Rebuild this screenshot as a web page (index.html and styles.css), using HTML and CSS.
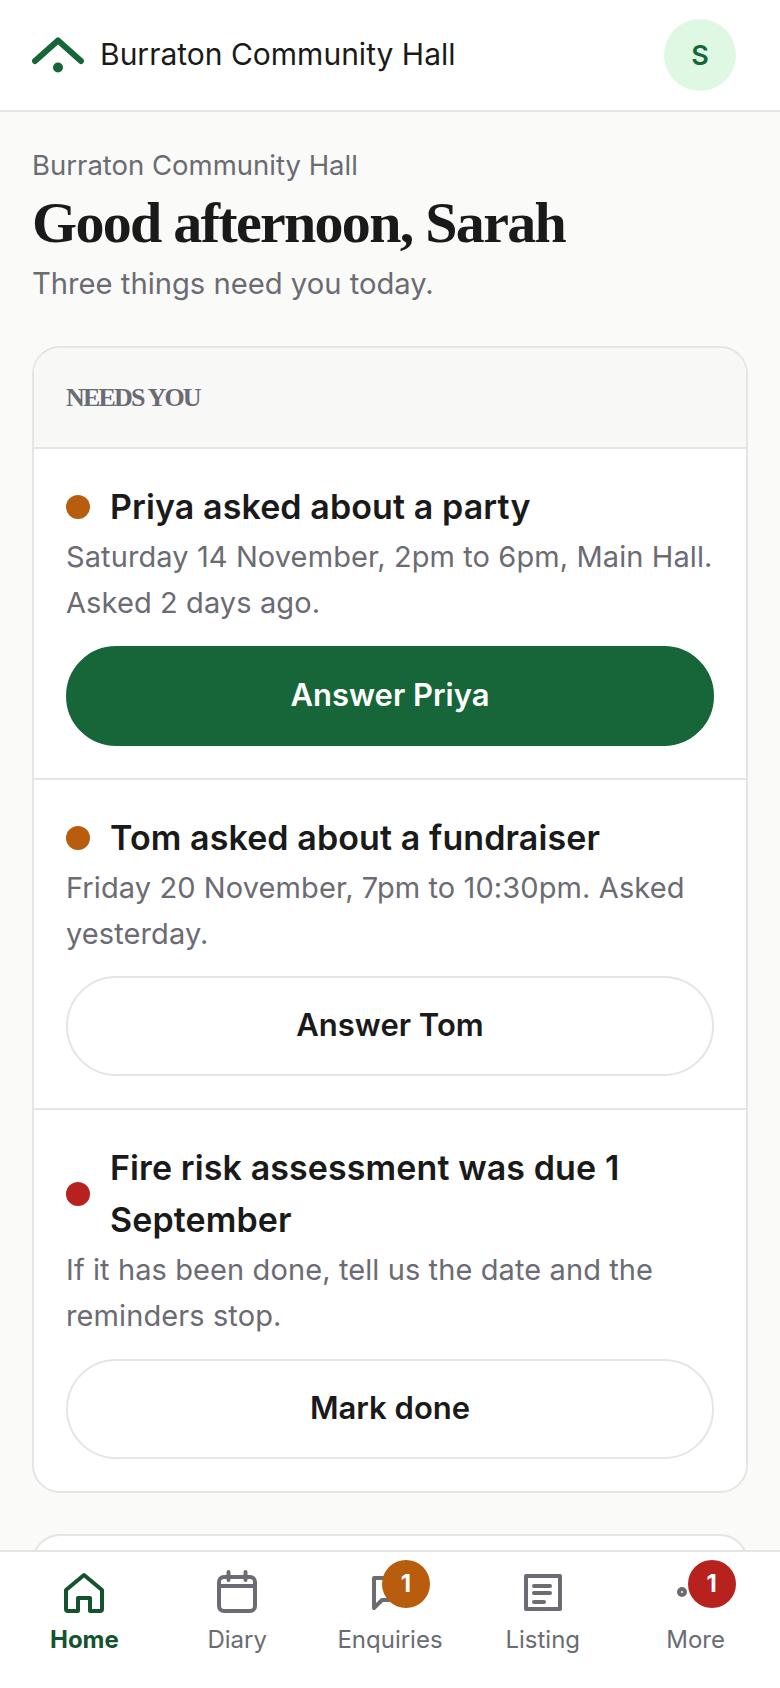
FILE: index.html
```html
<!DOCTYPE html>
<html lang="en">
<head>
    <meta charset="UTF-8">
    <meta name="viewport" content="width=device-width, initial-scale=1.0">
    <title>Burraton Community Hall</title>
    <link rel="stylesheet" href="styles.css">
</head>
<body>
    <div class="app">
        <!-- Top bar with logo and account -->
        <header class="topbar">
            <div class="brand">
                <svg class="brand-mark" viewBox="0 0 52 36" aria-hidden="true">
                    <path d="M3 24 L26 3.5 L49 24" fill="none" stroke="#17663a" stroke-width="6" stroke-linecap="round" stroke-linejoin="round"/>
                    <circle cx="26" cy="30.5" r="5" fill="#17663a"/>
                </svg>
                <span class="brand-name">Burraton Community Hall</span>
            </div>
            <div class="avatar">S</div>
        </header>

        <main class="content">
            <p class="eyebrow">Burraton Community Hall</p>
            <h1 class="greeting">Good afternoon, Sarah</h1>
            <p class="lead">Three things need you today.</p>

            <section class="card">
                <h2 class="card-head">NEEDS YOU</h2>

                <div class="task">
                    <div class="task-title"><span class="dot dot-amber"></span><span>Priya asked about a party</span></div>
                    <p class="task-text">Saturday 14 November, 2pm to 6pm, Main Hall. Asked 2 days ago.</p>
                    <button class="btn btn-primary">Answer Priya</button>
                </div>

                <div class="task">
                    <div class="task-title"><span class="dot dot-amber"></span><span>Tom asked about a fundraiser</span></div>
                    <p class="task-text">Friday 20 November, 7pm to 10:30pm. Asked yesterday.</p>
                    <button class="btn">Answer Tom</button>
                </div>

                <div class="task">
                    <div class="task-title"><span class="dot dot-red"></span><span>Fire risk assessment was due 1 September</span></div>
                    <p class="task-text">If it has been done, tell us the date and the reminders stop.</p>
                    <button class="btn">Mark done</button>
                </div>
            </section>

            <section class="card card-next"></section>
        </main>

        <!-- Bottom tabs -->
        <nav class="tabs">
            <a class="tab tab-active">
                <span class="tab-icon">
                    <svg viewBox="0 0 48 48" fill="none" stroke="currentColor" stroke-width="4" stroke-linejoin="round">
                        <path d="M6 21 L24 6 L42 21 V40 a2 2 0 0 1 -2 2 H30 V29 H18 V42 H8 a2 2 0 0 1 -2 -2 Z"/>
                    </svg>
                </span>
                Home
            </a>
            <a class="tab">
                <span class="tab-icon">
                    <svg viewBox="0 0 48 48" fill="none" stroke="currentColor" stroke-width="4" stroke-linecap="round" stroke-linejoin="round">
                        <rect x="6" y="8" width="36" height="34" rx="5"/>
                        <path d="M6 17 H42 M15.5 3 V11 M32.5 3 V11"/>
                    </svg>
                </span>
                Diary
            </a>
            <a class="tab">
                <span class="tab-icon">
                    <svg viewBox="0 0 48 48" fill="none" stroke="currentColor" stroke-width="4" stroke-linecap="round" stroke-linejoin="round">
                        <path d="M8 9 H40 V31 H16 L8 39 Z"/>
                    </svg>
                    <span class="badge badge-amber">1</span>
                </span>
                Enquiries
            </a>
            <a class="tab">
                <span class="tab-icon">
                    <svg viewBox="0 0 48 48" fill="none" stroke="currentColor" stroke-width="4" stroke-linecap="round" stroke-linejoin="round">
                        <rect x="7" y="7" width="34" height="33"/>
                        <path d="M15 17 H31 M15 24 H31 M15 33 H25"/>
                    </svg>
                </span>
                Listing
            </a>
            <a class="tab">
                <span class="tab-icon">
                    <svg viewBox="0 0 48 48" fill="none" stroke="currentColor" stroke-width="4">
                        <circle cx="10" cy="23" r="3"/>
                    </svg>
                    <span class="badge badge-red">1</span>
                </span>
                More
            </a>
        </nav>
    </div>
</body>
</html>
```

FILE: styles.css
```css
* {
    box-sizing: border-box;
}

body {
    margin: 0;
    background-color: #fafaf8;
    color: #1a1a1a;
    font-family: "Inter", "Liberation Sans", sans-serif;
}

.app {
    display: flex;
    flex-direction: column;
    height: 1688px;
    overflow: hidden;
}

/* Top bar */
.topbar {
    flex: none;
    height: 112px;
    display: flex;
    align-items: center;
    justify-content: space-between;
    padding: 0 44px 0 32px;
    background-color: #fff;
    border-bottom: 2px solid #e5e5e3;
}

.brand {
    display: flex;
    align-items: center;
    gap: 16px;
}

.brand-mark {
    width: 52px;
    height: 36px;
    display: block;
}

.brand-name {
    font-size: 30px;
    padding-bottom: 3px;
}

.avatar {
    width: 72px;
    height: 72px;
    border-radius: 50%;
    background-color: #dff8e4;
    color: #17663a;
    display: flex;
    align-items: center;
    justify-content: center;
    font-size: 27px;
    font-weight: 600;
}

/* Main column */
.content {
    flex: 1;
    min-height: 0;
    overflow: hidden;
    padding: 35px 32px 0;
}

.eyebrow {
    margin: 0;
    font-size: 27.5px;
    line-height: 36px;
    color: #6b6b73;
}

.greeting {
    margin: 4px 0 0;
    font-family: "Liberation Serif", serif;
    font-size: 58px;
    line-height: 72px;
    font-weight: 700;
    letter-spacing: -1.7px;
}

.lead {
    margin: 4px 0 0;
    font-size: 29.2px;
    line-height: 42px;
    color: #6b6b73;
}

.card {
    margin-top: 41px;
    background-color: #fff;
    border: 2px solid #e5e5e3;
    border-radius: 28px;
    overflow: hidden;
}

.card-head {
    margin: 0;
    padding: 32px;
    height: 101px;
    background-color: #f8f8f7;
    border-bottom: 2px solid #e5e5e3;
    font-family: "Liberation Serif", serif;
    font-size: 26px;
    line-height: 36px;
    font-weight: 700;
    letter-spacing: -1.8px;
    color: #6b6b73;
}

.task {
    padding: 32px;
    border-bottom: 2px solid #e5e5e3;
}

.task:last-child {
    border-bottom: 0;
}

.task-title {
    display: flex;
    align-items: center;
    gap: 20px;
    margin-bottom: 1px;
    font-size: 34px;
    line-height: 52px;
    font-weight: 600;
    letter-spacing: 0.1px;
}

.dot {
    flex: none;
    width: 24px;
    height: 24px;
    border-radius: 50%;
}

.dot-amber {
    background-color: #b85c0e;
}

.dot-red {
    background-color: #b7221f;
}

.task-text {
    margin: 0;
    font-size: 29px;
    line-height: 46px;
    letter-spacing: 0.1px;
    color: #6b6b73;
}

.btn {
    display: block;
    width: 100%;
    height: 100px;
    margin-top: 19.5px;
    padding-bottom: 4px;
    border: 2px solid #e5e5e3;
    border-radius: 50px;
    background-color: #fff;
    color: #1a1a1a;
    font-family: inherit;
    font-size: 31px;
    font-weight: 600;
}

.btn-primary {
    background-color: #17663a;
    border-color: #17663a;
    color: #fff;
}

.card-next {
    height: 120px;
}

/* Bottom tabs */
.tabs {
    flex: none;
    height: 138px;
    display: flex;
    padding: 0 8px;
    background-color: #fff;
    border-top: 2px solid #e5e5e3;
}

.tab {
    flex: 1;
    display: flex;
    flex-direction: column;
    align-items: center;
    padding-top: 17px;
    gap: 6px;
    font-size: 24px;
    line-height: 34px;
    color: #6b6b73;
}

.tab-active {
    color: #14532d;
    font-weight: 700;
}

.tab-icon {
    position: relative;
    width: 48px;
    height: 48px;
}

.tab-icon svg {
    display: block;
    width: 48px;
    height: 48px;
}

.badge {
    position: absolute;
    top: -9px;
    left: 16px;
    width: 48px;
    height: 48px;
    border-radius: 50%;
    display: flex;
    align-items: center;
    justify-content: center;
    color: #fff;
    font-size: 24px;
    font-weight: 700;
}

.badge-amber {
    background-color: #b85c0e;
}

.badge-red {
    background-color: #b7221f;
}
```
